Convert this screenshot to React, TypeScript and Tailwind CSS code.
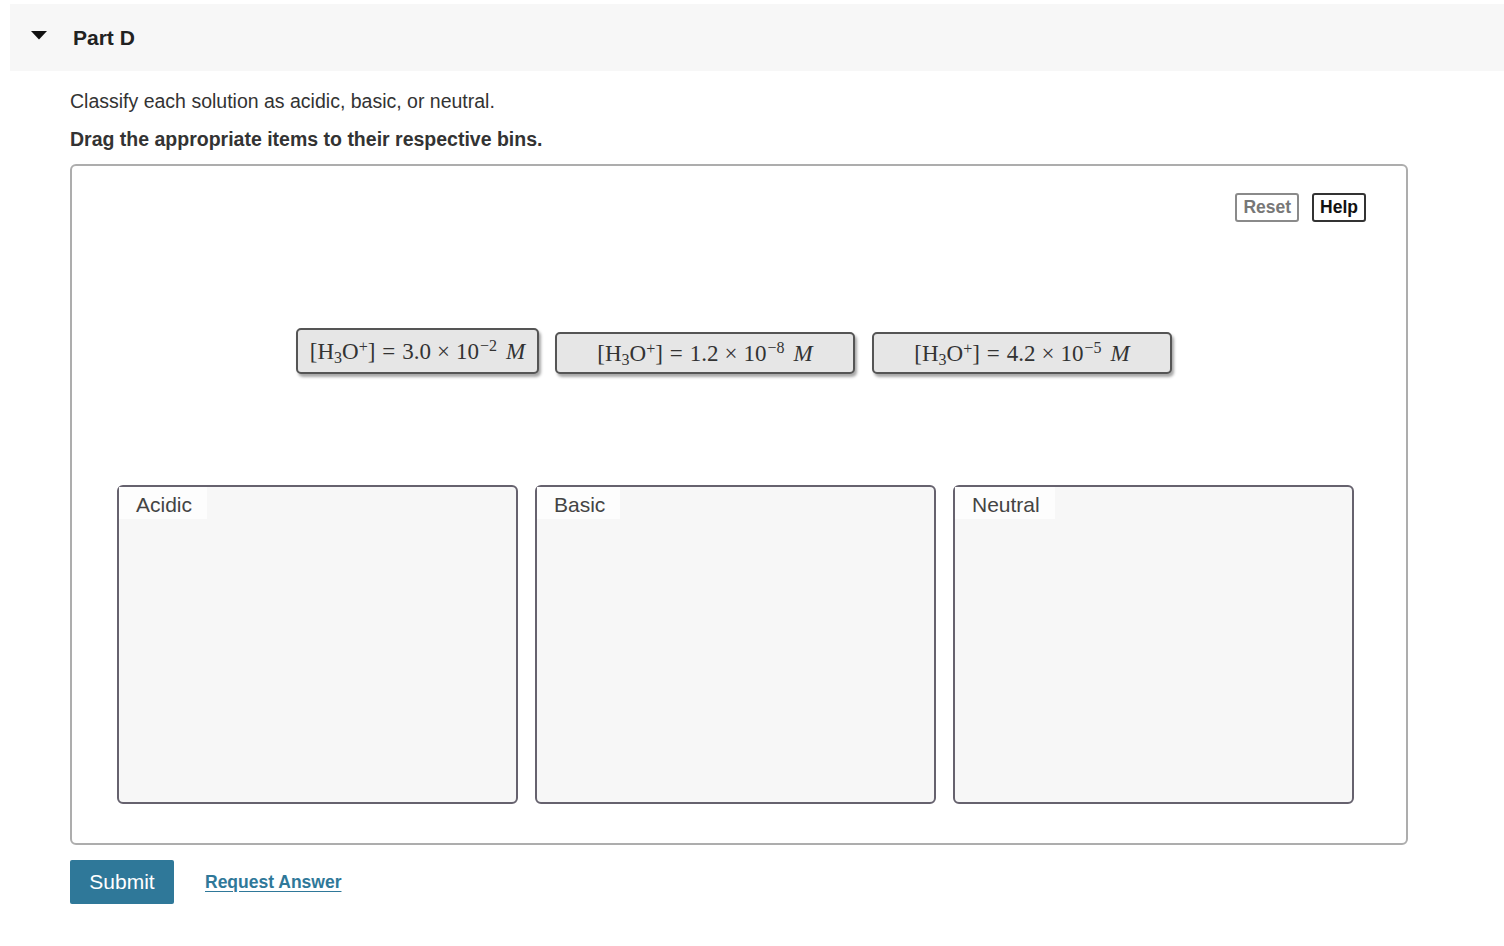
import { useState } from "react"

const math = { fontFamily: '"Liberation Serif", "DejaVu Serif", serif' }

function Chip({ coef, exp, wide }: { coef: string; exp: string; wide?: boolean }) {
  return (
    <div
      className={
        "flex items-center justify-center rounded-[5px] border-2 border-[#555] bg-[#e6e6e6] text-[23px] text-[#333] shadow-[2px_3px_3px_rgba(0,0,0,0.35)] " +
        (wide ? "h-[42px] w-[300px]" : "h-[46px] w-[243px]")
      }
      style={math}
    >
      <span className="whitespace-nowrap leading-none">
        <span>[H</span>
        <span className="relative top-[4px] inline-block text-[16px]">3</span>
        <span>O</span>
        <span className="relative -top-[7px] inline-block text-[16px]">+</span>
        <span>]</span>
        <span className="mx-[7px]">=</span>
        <span>{coef}</span>
        <span className="mx-[6px]">×</span>
        <span>10</span>
        <span className="relative -top-[8px] ml-[1px] inline-block text-[16px]">−{exp}</span>
        <span className="ml-[9px] italic">M</span>
      </span>
    </div>
  )
}

function Bin({ label }: { label: string }) {
  return (
    <div className="h-[319px] w-[401px] rounded-[6px] border-2 border-[#66626e] bg-[#f7f7f7]">
      <div className="inline-block h-[32px] bg-[#fdfdfd] pl-[17px] pr-[15px] pt-[7px] text-[21px] leading-[22px] text-[#444]">
        {label}
      </div>
    </div>
  )
}

export default function App() {
  const [open, setOpen] = useState(true)

  return (
    <main className="min-h-[946px] bg-white pl-[10px] pt-[4px] text-[#333]" style={{ fontFamily: '"Liberation Sans", Arial, sans-serif' }}>
      {/* Header */}
      <div className="flex h-[67px] items-center bg-[#f7f7f7]" onClick={() => setOpen(!open)}>
        <svg width="16" height="9" viewBox="0 0 16 9" className="ml-[21px] -mt-[4px]">
          <path d="M0 0 L16 0 L8 8.5 Z" fill="#111" />
        </svg>
        <h1 className="ml-[26px] text-[21px] font-bold text-[#222]">Part D</h1>
      </div>

      <div className="pl-[60px]">
        <p className="mt-[19px] text-[19.5px] leading-[22px]">Classify each solution as acidic, basic, or neutral.</p>
        <p className="mt-[16px] text-[19.5px] font-bold leading-[22px]">Drag the appropriate items to their respective bins.</p>

        {/* Drag area */}
        <div className="mt-[14px] h-[681px] w-[1338px] rounded-[6px] border-2 border-[#adadad] bg-white">
          <div className="mr-[40px] mt-[27px] flex justify-end gap-[13px]">
            <button className="h-[29px] rounded-[3px] border-2 border-[#8a8a8a] px-[6px] text-[17.5px] font-bold leading-none text-[#777]">
              Reset
            </button>
            <button className="h-[29px] rounded-[3px] border-2 border-[#333] px-[6px] text-[17.5px] font-bold leading-none text-[#111]">
              Help
            </button>
          </div>

          <div className="mt-[106px] ml-[224px] flex items-end gap-[16px]">
            <Chip coef="3.0" exp="2" />
            <Chip coef="1.2" exp="8" wide />
            <div className="ml-[1px]">
              <Chip coef="4.2" exp="5" wide />
            </div>
          </div>

          <div className="mt-[111px] ml-[45px] flex gap-[17px]">
            <Bin label="Acidic" />
            <Bin label="Basic" />
            <Bin label="Neutral" />
          </div>
        </div>

        <div className="mt-[15px] flex items-center">
          <button className="h-[44px] w-[104px] rounded-[2px] bg-[#2f7899] text-[21px] text-white">Submit</button>
          <a href="#" className="ml-[31px] text-[17.5px] font-bold text-[#2f7899] underline underline-offset-[3px]">
            Request Answer
          </a>
        </div>
      </div>
    </main>
  )
}
